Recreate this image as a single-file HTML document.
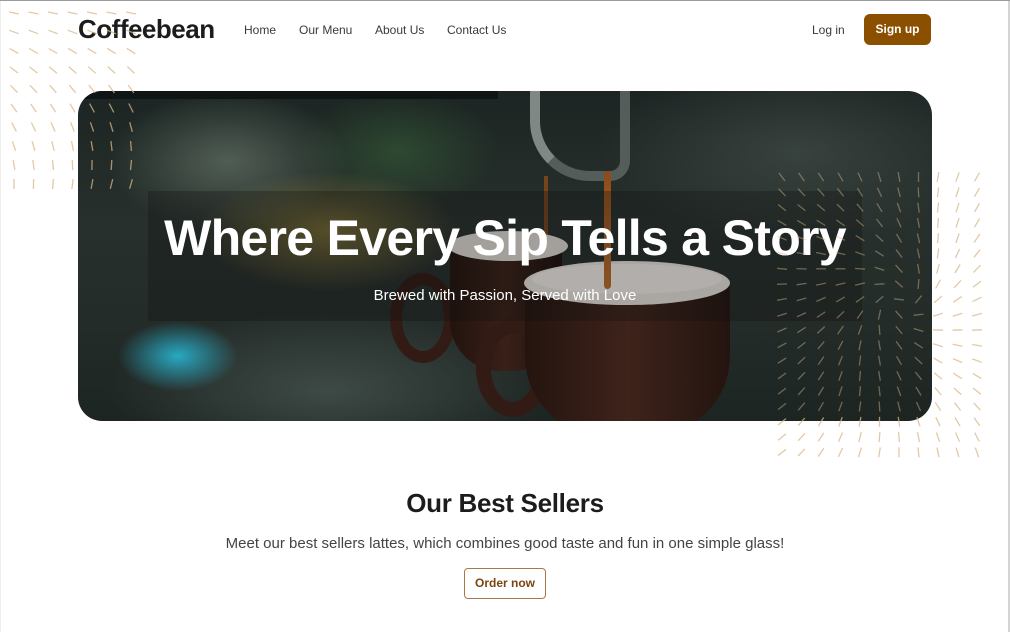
<!DOCTYPE html>
<html><head><meta charset="utf-8">
<style>
*{margin:0;padding:0;box-sizing:border-box}
html,body{width:1010px;height:632px;overflow:hidden;background:#fff;font-family:"Liberation Sans",sans-serif}
body{position:relative;border-top:1px solid #9a9a9a}
.rb{position:absolute;right:0;top:0;width:2px;height:632px;background:#d4d4d4}
.lb{position:absolute;left:0;top:0;width:1px;height:632px;background:#eee}
.logo{position:absolute;left:78px;top:13px;font-size:26px;font-weight:bold;color:#1c1c1c;letter-spacing:-0.5px}
.nav{position:absolute;top:22px;font-size:12px;color:#3a3a3a}
.signup{position:absolute;left:864px;top:13px;width:67px;height:31px;background:#8b4f00;border-radius:6px;color:#fff;font-size:12px;font-weight:bold;text-align:center;line-height:31px}
.hero{position:absolute;left:78px;top:90px;width:854px;height:330px;border-radius:24px;overflow:hidden;
background:
radial-gradient(ellipse 60px 35px at 100px 265px,rgba(40,190,220,.85),transparent),
radial-gradient(ellipse 130px 60px at 250px 140px,rgba(190,160,60,.5),transparent),
radial-gradient(ellipse 120px 70px at 150px 70px,rgba(150,170,150,.4),transparent),
radial-gradient(ellipse 100px 60px at 320px 60px,rgba(60,110,60,.45),transparent),
radial-gradient(ellipse 200px 90px at 720px 60px,rgba(90,100,95,.4),transparent),
radial-gradient(ellipse 220px 80px at 250px 300px,rgba(120,140,130,.35),transparent),
linear-gradient(180deg,#1c2523 0%,#27302c 40%,#242c29 70%,#1d2523 100%)}
.bar{position:absolute;left:0;top:0;width:420px;height:8px;background:#0f1414}
.cup1{position:absolute;left:372px;top:150px;width:112px;height:130px;background:linear-gradient(90deg,#22130e,#3a2018 50%,#1a0f0b);border-radius:12px 12px 50px 50px}
.rim1{position:absolute;left:370px;top:140px;width:120px;height:30px;border-radius:50%;background:#e2ddd7}
.handle1{position:absolute;left:312px;top:182px;width:66px;height:90px;border:12px solid #321b14;border-radius:50%}
.cup2{position:absolute;left:447px;top:185px;width:205px;height:160px;background:linear-gradient(90deg,#24140f,#3e231b 50%,#24140f);border-radius:10px 10px 80px 80px}
.rim{position:absolute;left:446px;top:170px;width:206px;height:44px;border-radius:50%;background:#ece7e1}
.rim i{position:absolute;left:8px;top:3px;width:190px;height:30px;border-radius:50%;background:#f6f2ee}
.handle{position:absolute;left:398px;top:228px;width:74px;height:98px;border:15px solid #321b14;border-radius:50%}
.stream{position:absolute;left:526px;top:80px;width:7px;height:118px;background:linear-gradient(#8a4a1a,#c0702a);border-radius:4px}
.stream2{position:absolute;left:466px;top:85px;width:4px;height:80px;background:#8a4a1a;opacity:.8}
.spout{position:absolute;left:452px;top:-10px;width:100px;height:100px;border-radius:0 0 20px 60px;border:10px solid #555d5a;border-top:none;border-left-color:#7f8884}
.band{position:absolute;left:70px;top:100px;width:714px;height:130px;background:rgba(15,18,18,.3)}
.title{position:absolute;left:0;width:854px;top:118px;text-align:center;color:#fff;font-size:50px;font-weight:bold;letter-spacing:-0.7px}
.sub{position:absolute;left:0;width:854px;top:196px;text-align:center;color:#fff;font-size:15px}
h2{position:absolute;left:0;width:1010px;top:487px;text-align:center;font-size:26px;font-weight:bold;color:#1c1c1c;letter-spacing:-0.3px}
.p{position:absolute;left:0;width:1010px;top:534px;text-align:center;font-size:15px;color:#444}
.btn{position:absolute;left:464px;top:567px;width:82px;height:31px;border:1px solid #a8784a;border-radius:4px;color:#7a4510;font-size:12px;font-weight:bold;text-align:center;line-height:29px}
svg{position:absolute;left:0;top:0;pointer-events:none}
</style></head><body>
<div class="lb"></div><div class="rb"></div>
<div class="logo">Coffeebean</div>
<div class="nav" style="left:244px">Home</div>
<div class="nav" style="left:299px">Our Menu</div>
<div class="nav" style="left:375px">About Us</div>
<div class="nav" style="left:447px">Contact Us</div>
<div class="nav" style="left:812px">Log in</div>
<div class="signup">Sign up</div>
<div class="hero">
<div class="bar"></div>
<div class="spout"></div>
<div class="stream2"></div>
<div class="handle1"></div>
<div class="cup1"></div>
<div class="rim1"></div>
<div class="handle"></div>
<div class="cup2"></div>
<div class="rim"><i></i></div>
<div class="stream"></div>
<div class="band"></div>
<div class="title">Where Every Sip Tells a Story</div>
<div class="sub">Brewed with Passion, Served with Love</div>
</div>
<h2>Our Best Sellers</h2>
<div class="p">Meet our best sellers lattes, which combines good taste and fun in one simple glass!</div>
<div class="btn">Order now</div>
<svg id="d" width="1010" height="632"></svg>
<script>
var s='',L=5;
function add(x,y,a,op){var c=Math.cos(a)*L,n=Math.sin(a)*L;s+='<line x1="'+(x-c).toFixed(1)+'" y1="'+(y-n).toFixed(1)+'" x2="'+(x+c).toFixed(1)+'" y2="'+(y+n).toFixed(1)+'" stroke="#d9b68a" stroke-opacity="'+op+'" stroke-width="1.3"/>';}
for(var y=12;y<=185;y+=19)for(var x=14;x<=140;x+=19.5){var t=(y-12)/173;var a=(12+t*75+t*(x/140)*22)*Math.PI/180;add(x,y,a,0.75);}
for(var y=176;y<=452;y+=15.3)for(var x=782;x<=980;x+=19.5){var dx=x-900,dy=y-300,r=Math.sqrt(dx*dx+dy*dy);var a=Math.atan2(dy,dx)-0.9+r*0.006;var inH=(x<932&&y<420);add(x,y,a,inH?0.45:0.75);}
document.getElementById('d').innerHTML=s;
</script>
</body></html>
